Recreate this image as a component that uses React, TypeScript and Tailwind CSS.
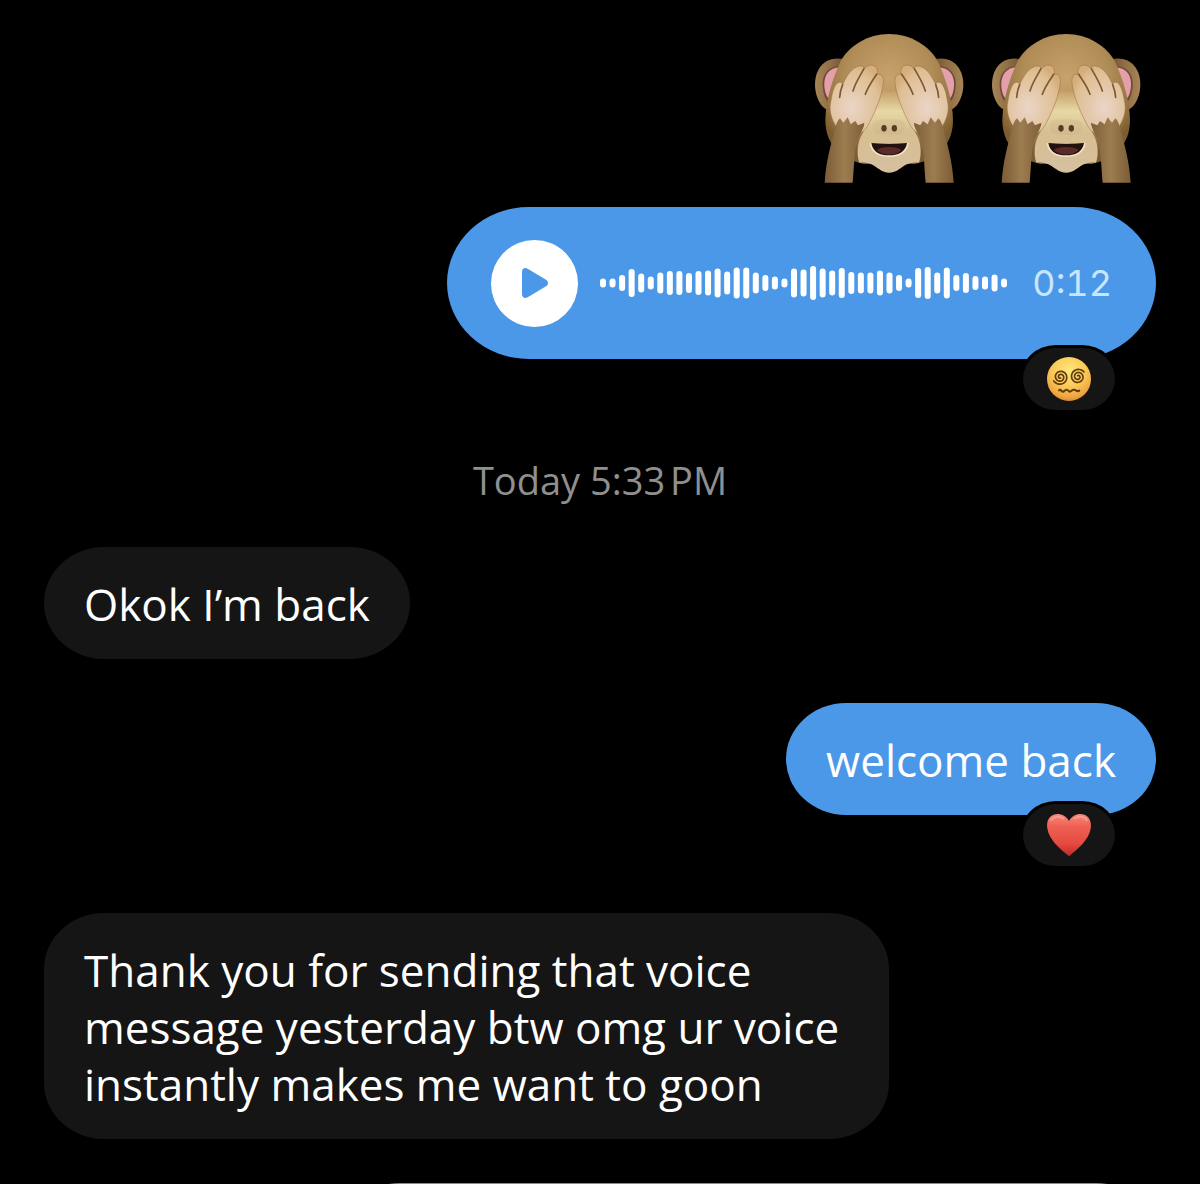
import React from "react";
import clsx from "clsx";

type bubbleProps = {
  mine?: boolean;
  reaction?: React.ReactNode;
  children?: React.ReactNode;
};

const waveHeights = [
  9, 9, 16, 28, 19, 13, 21, 24, 24, 20, 24, 25, 29, 23, 31, 31, 21, 16, 13, 9,
  29, 27, 34, 29, 25, 30, 22, 21, 21, 25, 21, 16, 9, 30, 32, 21, 31, 16, 20, 14,
  13, 17, 9,
];

const spiral = (cx: number, cy: number, end: number) => {
  const points: string[] = [];
  const turns = 2.2;
  for (let i = 0; i <= 80; i++) {
    const t = i / 80;
    const angle = end - (1 - t) * turns * Math.PI * 2;
    const r = 3 + t * 20;
    points.push(
      `${(cx + r * Math.cos(angle)).toFixed(1)} ${(
        cy +
        r * Math.sin(angle)
      ).toFixed(1)}`
    );
  }
  return `M${points.join(" L")}`;
};

const MonkeyHalf = () => (
  <g>
    <path
      d="M93 242C97 216 103 195 114 188C121 184 127 188 128 194C140 166 158 140 180 138C187 137 191 140 193 146C202 136 214 132 225 139C233 145 233 155 231 163C244 160 252 170 250 188C248 218 228 272 212 300C202 322 192 336 178 340L110 322C93 295 86 268 93 242Z"
      fill="url(#hand)"
      stroke="#94703f"
      strokeOpacity="0.5"
      strokeWidth="3"
    />
    <path
      d="M192 146C180 168 167 186 159 213M230 163C217 182 204 200 196 223M128 194C123 206 120 218 119 232"
      fill="none"
      stroke="#80592f"
      strokeWidth="5"
      strokeLinecap="round"
    />
    <path
      d="M74 488C78 425 92 375 105 328C108 313 112 302 120 295L130 308L143 292L152 313L166 303L174 316L193 308C193 330 171 348 167 382C162 420 161 460 158 488Z"
      fill="url(#arm)"
    />
  </g>
);

const Monkey = () => (
  <svg viewBox="36 36 456 456" className="w-[152px] h-[152px]" aria-hidden="true">
    <defs>
      <radialGradient id="head" cx="0.5" cy="0.34" r="0.62">
        <stop offset="0" stopColor="#c8a26c" />
        <stop offset="0.55" stopColor="#b08c57" />
        <stop offset="0.85" stopColor="#967340" />
        <stop offset="1" stopColor="#7c5d30" />
      </radialGradient>
      <linearGradient id="ear" x1="0" x2="1">
        <stop offset="0" stopColor="#a78558" />
        <stop offset="0.5" stopColor="#8f6e44" />
        <stop offset="1" stopColor="#6d5030" />
      </linearGradient>
      <linearGradient id="face" x1="0" y1="0" x2="0" y2="1">
        <stop offset="0" stopColor="#c4a068" />
        <stop offset="0.25" stopColor="#e8d8a6" />
        <stop offset="0.5" stopColor="#d6bf90" />
        <stop offset="1" stopColor="#d6c0a0" />
      </linearGradient>
      <radialGradient id="hand" cx="0.4" cy="0.62" r="0.66">
        <stop offset="0" stopColor="#ead6c8" />
        <stop offset="0.45" stopColor="#e4c8aa" />
        <stop offset="0.8" stopColor="#dfbf94" />
        <stop offset="1" stopColor="#d4ae7d" />
      </radialGradient>
      <linearGradient id="arm" x1="0" x2="1">
        <stop offset="0" stopColor="#7a5c36" />
        <stop offset="0.5" stopColor="#9d7c50" />
        <stop offset="1" stopColor="#7d5f3a" />
      </linearGradient>
      <g id="earShape">
        <path
          d="M132 118C76 106 45 145 45 195C46 235 66 268 88 271L140 220Z"
          fill="url(#ear)"
        />
        <path
          d="M122 138C82 138 66 166 68 198C70 224 77 240 88 250L130 200Z"
          fill="#6f4a35"
        />
        <path
          d="M122 142C86 142 71 168 73 198C75 218 79 230 88 238L130 200Z"
          fill="#e3a0ab"
        />
      </g>
    </defs>
    <use href="#earShape" />
    <use href="#earShape" transform="translate(535 0) scale(-1 1)" />
    <path
      d="M267 42C203 42 146 78 121 125C98 175 77 240 76 300C76 372 120 415 190 432L345 432C415 415 459 372 459 300C458 240 437 175 414 125C389 78 332 42 267 42Z"
      fill="url(#head)"
    />
    <path
      d="M267 218C258 206 235 215 222 250C210 285 205 310 188 340C170 368 170 408 178 428C205 424 222 436 237 447C257 462 278 462 298 447C313 436 330 424 357 428C365 408 365 368 347 340C330 310 325 285 313 250C300 215 276 206 267 218Z"
      fill="url(#face)"
    />
    <path
      d="M224 304C236 296 298 296 311 304C320 314 318 338 300 342C280 346 254 346 234 342C216 338 214 314 224 304Z"
      fill="#cbb083"
      opacity="0.3"
    />
    <ellipse cx="252" cy="325" rx="8" ry="10" fill="#573a28" />
    <ellipse cx="283" cy="325" rx="8" ry="10" fill="#573a28" />
    <path
      d="M209 369C212 401 240 411 267 411C295 411 323 401 326 369Z"
      fill="#f1e3c4"
    />
    <path
      d="M214 369Q267 374 321 369C317 397 293 406 267 406C241 406 218 397 214 369Z"
      fill="#21120f"
    />
    <path
      d="M230 391C245 378 290 378 305 391C286 408 249 408 230 391Z"
      fill="#5c2b29"
    />
    <MonkeyHalf />
    <g transform="translate(535 0) scale(-1 1)">
      <MonkeyHalf />
    </g>
  </svg>
);

const DizzyFace = () => (
  <svg viewBox="0 0 132 132" className="w-11 h-11" aria-hidden="true">
    <defs>
      <radialGradient id="dizzy" cx="0.5" cy="0.3" r="0.72">
        <stop offset="0" stopColor="#ffe679" />
        <stop offset="0.5" stopColor="#fbcb58" />
        <stop offset="0.85" stopColor="#f0a540" />
        <stop offset="1" stopColor="#d8862f" />
      </radialGradient>
    </defs>
    <circle cx="66" cy="66" r="66" fill="url(#dizzy)" />
    <g fill="none" stroke="#5f3b0c" strokeWidth="5" strokeLinecap="round">
      <path d={spiral(40, 60, 2.6)} />
      <path d={spiral(93, 59, 5.6)} />
      <path
        d="M36 100C42 94 44 108 51 103C58 97 60 97 66 103C72 107 74 98 80 98C88 98 90 106 97 101"
        strokeWidth="6"
      />
    </g>
  </svg>
);

const Heart = () => (
  <svg viewBox="0 0 134 134" className="w-11 h-11" aria-hidden="true">
    <defs>
      <linearGradient id="heart" x1="0" y1="0" x2="0" y2="1">
        <stop offset="0" stopColor="#f58a7d" />
        <stop offset="0.3" stopColor="#ee6053" />
        <stop offset="0.7" stopColor="#e64a40" />
        <stop offset="1" stopColor="#bd2a28" />
      </linearGradient>
    </defs>
    <path
      d="M67 24C57 5 36 -1 20 5C4 11 -2 28 1 47C6 83 42 110 67 132C92 110 128 83 133 47C136 28 130 11 114 5C98 -1 77 5 67 24Z"
      fill="url(#heart)"
    />
    <path
      d="M13 22C20 10 38 8 50 17M84 17C96 8 114 10 121 22"
      fill="none"
      stroke="#fbb0a5"
      strokeWidth="6"
      strokeLinecap="round"
      opacity="0.6"
    />
  </svg>
);

const Waveform = () => (
  <svg viewBox="0 0 407 34" className="w-[407px] h-[34px]" aria-hidden="true">
    {waveHeights.map((height, i) => (
      <rect
        key={i}
        x={i * 9.55}
        y={17 - height / 2}
        width="6"
        height={height}
        rx="3"
        fill="#fff"
      />
    ))}
  </svg>
);

const Reaction = ({ children }: { children: React.ReactNode }) => (
  <span className="absolute right-[38px] -bottom-[54px] w-[98px] h-[68px] flex justify-center items-center rounded-[36px/34px] border-3 border-black bg-[#151515]">
    {children}
  </span>
);

const Bubble = ({ mine, reaction, children }: bubbleProps) => (
  <div
    className={clsx(
      "relative max-w-[76%] px-10 pt-[29px] pb-[26px] rounded-[60px/56px] text-white text-[44px] leading-[57px]",
      mine ? "self-end bg-[#4b98e8]" : "self-start bg-[#151515]",
      reaction && "mb-[54px]"
    )}
  >
    <p>{children}</p>
    {reaction && <Reaction>{reaction}</Reaction>}
  </div>
);

const VoiceMessage = () => (
  <div className="relative self-end flex items-center h-[152px] px-11 mb-[54px] rounded-[82px/76px] bg-[#4b98e8]">
    <button
      aria-label="Play voice message"
      className="w-[87px] h-[87px] mr-[22px] flex justify-center items-center rounded-full bg-white"
    >
      <svg viewBox="0 0 78 90" className="w-[26px] h-[30px]" aria-hidden="true">
        <path
          d="M0 12C0 2 8 -3 17 2L72 35C80 40 80 50 72 55L17 88C8 93 0 88 0 78Z"
          fill="#4b98e8"
        />
      </svg>
    </button>
    <Waveform />
    <span className="ml-[25px] font-['Inter',sans-serif] tabular-nums text-[36px] leading-[44px] text-[#c9e6ff]">
      0:12
    </span>
    <Reaction>
      <DizzyFace />
    </Reaction>
  </div>
);

export default function App() {
  return (
    <main className="h-screen overflow-hidden bg-black px-11 pt-8 flex flex-col gap-11 font-['Open_Sans',sans-serif]">
      <div className="flex flex-col gap-[23px]">
        <div className="self-end flex gap-[25px] mr-[15px]">
          <Monkey />
          <Monkey />
        </div>
        <VoiceMessage />
      </div>

      <time className="self-center text-[38px] leading-[46px] text-[#8f8f8f]">
        Today 5:33{"\u202f"}PM
      </time>

      <Bubble>Okok I’m back</Bubble>
      <Bubble mine reaction={<Heart />}>
        welcome back
      </Bubble>
      <Bubble>
        Thank you for sending that voice message yesterday btw omg ur voice
        instantly makes me want to goon
      </Bubble>

      {/* next message, scrolled below the fold */}
      <div className="self-end shrink-0 w-[816px] h-28 rounded-[60px/56px] bg-[#4b98e8]" />
    </main>
  );
}
